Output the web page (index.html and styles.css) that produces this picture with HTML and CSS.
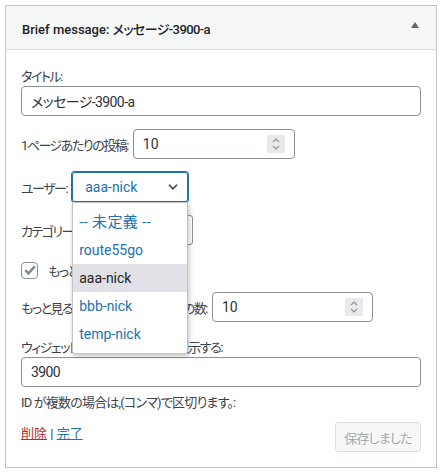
FILE: index.html
```html
<!DOCTYPE html>
<html lang="ja">
<head>
  <meta charset="UTF-8" />
  <meta name="viewport" content="width=device-width, initial-scale=1.0" />
  <title>Brief message widget</title>
  <link rel="stylesheet" href="styles.css">
</head>
<body>
  <div class="widget">
    <div class="widget-top">
      <h3 class="widget-title">Brief message: <span class="jp">メッセージ-3900-a</span></h3>
      <svg class="toggle" width="8" height="6" viewBox="0 0 8 6"><polygon points="0,6 4,0 8,6" fill="#646970"/></svg>
    </div>

    <div class="widget-inside">
      <p class="field stack">
        <label>タイトル:</label>
        <input class="text" type="text" value="メッセージ-3900-a" />
      </p>

      <p class="field row">
        <label>1ページあたりの投稿:</label>
        <span class="num">
          <span class="num-value">10</span>
          <span class="spin">
            <svg width="8" height="14" viewBox="0 0 8 14"><polyline points="1,5 4,2 7,5" fill="none" stroke="#8c8f94" stroke-width="1.1"/><polyline points="1,9 4,12 7,9" fill="none" stroke="#8c8f94" stroke-width="1.1"/></svg>
          </span>
        </span>
      </p>

      <div class="field row">
        <label>ユーザー:</label>
        <div class="select-wrap">
          <div class="select focus">
            <span>aaa-nick</span>
            <svg width="10" height="6" viewBox="0 0 10 6"><polyline points="1,0.8 5,4.8 9,0.8" fill="none" stroke="#3c434a" stroke-width="1.6"/></svg>
          </div>
          <ul class="dropdown">
            <li>--&nbsp;未定義&nbsp;--</li>
            <li>route55go</li>
            <li class="active">aaa-nick</li>
            <li>bbb-nick</li>
            <li>temp-nick</li>
          </ul>
        </div>
      </div>

      <div class="field row">
        <label>カテゴリー:</label>
        <div class="select category">
          <span>-- 未定義 --</span>
        </div>
      </div>

      <div class="field row check-row">
        <span class="checkbox">
          <svg width="14" height="14" viewBox="0 0 14 14"><polyline points="2.3,7.2 5.5,10.4 11.8,3.4" fill="none" stroke="#7e8993" stroke-width="2.4"/></svg>
        </span>
        <label>もっと見るを表示</label>
      </div>

      <p class="field row more-row">
        <label>もっと見るで追加で表示する投稿の数:</label>
        <span class="num short">
          <span class="num-value">10</span>
          <span class="spin">
            <svg width="8" height="14" viewBox="0 0 8 14"><polyline points="1,5 4,2 7,5" fill="none" stroke="#8c8f94" stroke-width="1.1"/><polyline points="1,9 4,12 7,9" fill="none" stroke="#8c8f94" stroke-width="1.1"/></svg>
          </span>
        </span>
      </p>

      <p class="field stack id-field">
        <label>ウィジェットに指定IDの投稿のみ表示する:</label>
        <input class="text" type="text" value="3900" />
      </p>
      <p class="note">ID が複数の場合は,(コンマ)で区切ります。:</p>

      <div class="actions">
        <div class="links">
          <a href="#" class="delete">削除</a> | <a href="#" class="done">完了</a>
        </div>
        <button type="button" disabled>保存しました</button>
      </div>
    </div>
  </div>
</body>
</html>
```

FILE: styles.css
```css
body {
  margin: 0;
  background: #fff;
  font-family: Roboto, "Noto Sans CJK JP", sans-serif;
  font-size: 13px;
  color: #3c434a;
  font-feature-settings: "palt";
}
.widget {
  margin: 5px 0 0 5px;
  width: 430px;
  border: 1px solid #c3c4c7;
}
.widget-top {
  display: flex;
  align-items: center;
  justify-content: space-between;
  height: 43px;
  padding: 0 17px 0 16px;
  background: #f6f7f7;
  border-bottom: 1px solid #dcdcde;
}
.widget-title {
  margin: 2px 0 0;
  font-size: 13px;
  font-weight: 500;
  color: #1d2327;
}
.widget-title .jp {
  letter-spacing: -0.6px;
}
.toggle {
  align-self: flex-start;
  margin-top: 16px;
}
.widget-inside {
  padding: 17px 15px 15px;
}
.field {
  margin: 0 0 13px;
}
label {
  letter-spacing: -1.5px;
}
.stack label {
  display: block;
  line-height: 19px;
}
input.text {
  display: block;
  box-sizing: border-box;
  width: 100%;
  height: 30px;
  margin: 0;
  padding: 0 9px;
  border: 1px solid #8c8f94;
  border-radius: 4px;
  font-family: inherit;
  font-size: 14px;
  letter-spacing: -0.6px;
  color: #2c3338;
  font-feature-settings: "palt";
}
.row {
  display: flex;
  align-items: center;
  gap: 5px;
}
.num {
  display: flex;
  align-items: center;
  box-sizing: border-box;
  width: 162px;
  height: 30px;
  padding: 0 9px;
  border: 1px solid #8c8f94;
  border-radius: 4px;
  font-size: 14px;
  color: #2c3338;
}
.num.short {
  width: 161px;
}
.num-value {
  flex: 1;
}
.spin {
  display: flex;
  align-items: center;
  justify-content: center;
  width: 18px;
  height: 18px;
  background: #e9e9ed;
}
.select-wrap {
  position: relative;
}
.select {
  display: flex;
  align-items: center;
  justify-content: space-between;
  box-sizing: border-box;
  width: 116px;
  height: 30px;
  padding: 0 9px 0 12px;
  border: 1px solid #8c8f94;
  border-radius: 3px;
  font-size: 14px;
  color: #2c3338;
}
.select.focus {
  border-color: #2271b1;
  box-shadow: 0 0 0 1px #2271b1;
  color: #2271b1;
}
.select.category {
  width: 113px;
}
.dropdown {
  position: absolute;
  top: 100%;
  left: 0;
  z-index: 5;
  box-sizing: border-box;
  width: 116px;
  margin: 0;
  padding: 5px 0;
  list-style: none;
  background: #fff;
  border: 1px solid #c3c4c7;
  border-radius: 0 0 3px 3px;
  box-shadow: 1px 2px 5px rgba(0, 0, 0, 0.25);
  font-size: 14px;
}
.dropdown li {
  height: 28px;
  line-height: 28px;
  padding-left: 6px;
  color: #2271b1;
}
.dropdown li:first-child {
  font-size: 15px;
  letter-spacing: 0.3px;
}
.dropdown li.active {
  background: #e1e0e6;
  color: #1d2327;
}
.check-row {
  height: 24px;
  gap: 10px;
  margin-bottom: 10px;
}
.checkbox {
  display: flex;
  align-items: center;
  justify-content: center;
  box-sizing: border-box;
  width: 17px;
  height: 17px;
  border: 1px solid #8c8f94;
  border-radius: 4px;
}
.more-row {
  margin-bottom: 16px;
}
.id-field {
  margin-bottom: 0;
}
.note {
  margin: 6px 0 0;
  line-height: 19px;
  letter-spacing: -0.8px;
}
.actions {
  display: flex;
  justify-content: space-between;
  align-items: flex-start;
  margin-top: 10px;
}
.links {
  line-height: 19px;
  padding-top: 2px;
}
.links a {
  text-decoration: underline;
}
.delete {
  color: #b32d2e;
}
.done {
  color: #2271b1;
}
button {
  box-sizing: border-box;
  width: 86px;
  height: 30px;
  padding: 0;
  background: #f6f7f7;
  border: 1px solid #dcdcde;
  border-radius: 3px;
  color: #a7aaad;
  font-family: inherit;
  font-size: 13px;
  letter-spacing: -0.8px;
  font-feature-settings: "palt";
}
```
